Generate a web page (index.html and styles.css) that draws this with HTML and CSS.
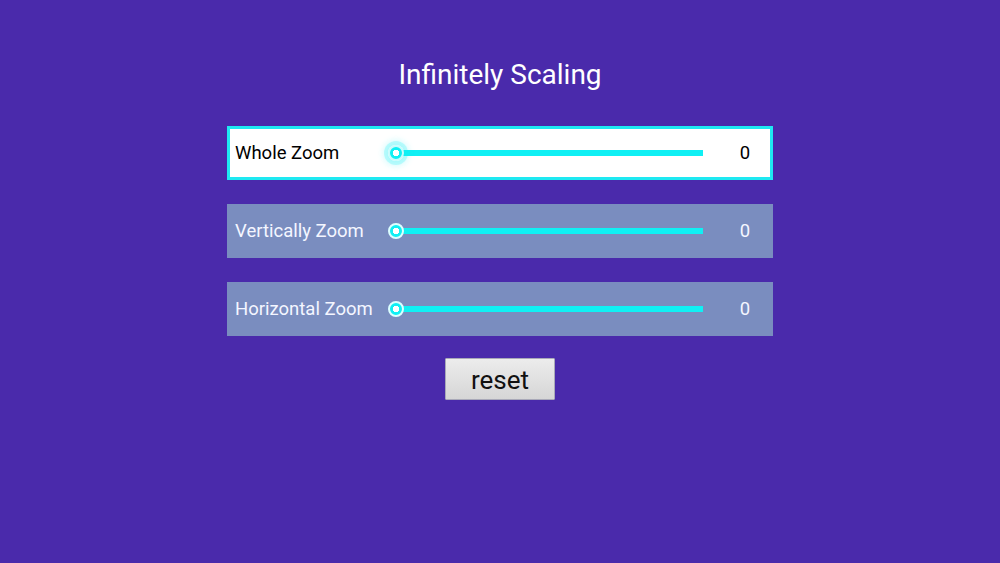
FILE: index.html
```html
<!DOCTYPE html>
<html>
<head>
<meta charset="utf-8">
<link rel="stylesheet" href="styles.css">
</head>
<body>
<main class="page">
  <h1 class="title">Infinitely Scaling</h1>
  <div class="rows">
    <div class="row row-active">
      <span class="label">Whole Zoom</span>
      <div class="slider"><div class="track"></div><div class="thumb thumb-focus"></div></div>
      <span class="value">0</span>
    </div>
    <div class="row">
      <span class="label">Vertically Zoom</span>
      <div class="slider"><div class="track"></div><div class="thumb"></div></div>
      <span class="value">0</span>
    </div>
    <div class="row">
      <span class="label">Horizontal Zoom</span>
      <div class="slider"><div class="track"></div><div class="thumb"></div></div>
      <span class="value">0</span>
    </div>
  </div>
  <button class="reset">reset</button>
</main>
</body>
</html>
```
FILE: styles.css
```css
html, body {
  margin: 0;
  height: 100%;
}
body {
  background: #4a2aab;
  font-family: Roboto, "Liberation Sans", sans-serif;
}
.page {
  display: flex;
  flex-direction: column;
  align-items: center;
  padding-top: 59px;
}
.title {
  margin: 0;
  font-size: 28px;
  line-height: 32px;
  font-weight: 400;
  color: #ffffff;
}
.rows {
  margin-top: 35px;
  display: flex;
  flex-direction: column;
  gap: 24px;
}
.row {
  box-sizing: border-box;
  width: 546px;
  height: 54px;
  display: flex;
  align-items: center;
  padding-left: 8px;
  background: #7a8dbf;
  color: #f4f6ff;
  font-size: 18.5px;
}
.row-active {
  background: #ffffff;
  border: 3px solid #1ee9f2;
  padding-left: 5px;
  color: #000000;
}
.label {
  width: 153px;
  flex: none;
}
.slider {
  position: relative;
  width: 315px;
  height: 20px;
  flex: none;
}
.track {
  position: absolute;
  left: 8px;
  right: 0;
  top: 7px;
  height: 6px;
  background: #10f0f4;
}
.thumb {
  position: absolute;
  left: 0;
  top: 2px;
  box-sizing: border-box;
  width: 16px;
  height: 16px;
  border-radius: 50%;
  border: 2px solid #dcffff;
  background: radial-gradient(circle, #ffffff 0 3px, #10f0f4 3.5px);
}
.thumb-focus {
  border-color: #c8fbfc;
  box-shadow: 0 0 0 4px rgba(16, 240, 244, 0.22), 0 0 6px 5px rgba(16, 240, 244, 0.18);
}
.value {
  margin-left: auto;
  margin-right: 18px;
  width: 20px;
  text-align: center;
}
.row-active .value {
  margin-right: 15px;
}
.reset {
  margin-top: 22px;
  width: 110px;
  height: 42px;
  border: 1px solid #a9a9b8;
  border-radius: 1px;
  background: linear-gradient(#ececec, #d6d6d6);
  font-family: Roboto, "Liberation Sans", sans-serif;
  font-size: 26px;
  line-height: 42px;
  color: #111111;
  padding: 0 0 0 0;
}
```
